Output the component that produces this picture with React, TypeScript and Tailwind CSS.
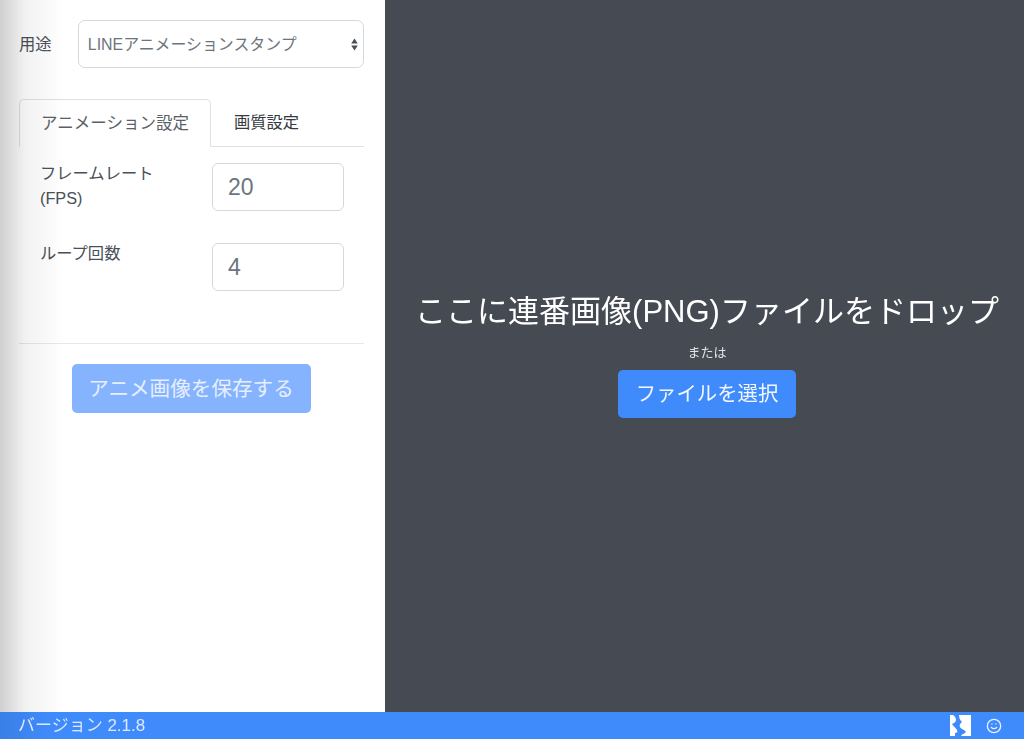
import { Smile } from "lucide-react";

function NumberRow({ label, value }: { label: React.ReactNode; value: string }) {
	return (
		<div className="flex h-[48px] items-start pl-[21px]">
			<div className="-mt-[2px] w-[172px] text-[16.3px] leading-[25px] text-[#495057]">{label}</div>
			<div className="flex h-[48px] w-[132px] items-center rounded-[6px] border border-[#d3d9df] bg-white pl-[15px] text-[23px] text-[#6c757d]">
				{value}
			</div>
		</div>
	);
}

function SelectArrows() {
	return (
		<svg width="7" height="13" viewBox="0 0 7 13" className="absolute right-[5px] top-[17px]">
			<path d="M3.5 0.5 L6.8 5.5 L0.2 5.5 Z" fill="#4a4f55" />
			<path d="M3.5 12.5 L6.8 7.5 L0.2 7.5 Z" fill="#4a4f55" />
		</svg>
	);
}

function Logo() {
	return (
		<svg width="21" height="21" viewBox="0 0 21 21">
			<rect width="21" height="21" fill="#ffffff" />
			<path
				fill="#408bfc"
				d="M3 0 H9 C9 3 10 5 12 7 C10 9 9 10 10 12 C11 14 14 14 16 17 C14 19 12 19 11 21 H5 V18 C7 18 8 17 7 15 C6 13 3 11 2 9 C4 8 6 7 6 5 C6 3 5 1 3 0 Z"
			/>
		</svg>
	);
}

export default function App() {
	return (
		<div className="flex h-[739px] w-[1024px] flex-col overflow-hidden font-['Liberation_Sans','Noto_Sans_CJK_JP',sans-serif]">
			<div className="flex h-[712px]">
				<aside className="relative w-[385px] shrink-0 bg-white pl-[19px] pr-[21px] pt-[20px]">
					<div className="pointer-events-none absolute inset-y-0 left-0 z-10 w-[64px] bg-gradient-to-r from-[#d0d0d0] via-[#f2f2f2] via-40% to-white mix-blend-multiply" />
					<div className="flex items-center">
						<span className="w-[59px] text-[16.3px] text-[#495057]">用途</span>
						<div className="relative flex h-[48px] w-[287px] items-center rounded-[7px] border border-[#d3d9df] bg-white pl-[9px] pt-[1px] text-[15.9px] text-[#6c757d]">
							LINEアニメーションスタンプ
							<SelectArrows />
						</div>
					</div>

					<div className="mt-[31px] flex h-[48px] border-b border-[#dee2e6]">
						<div className="-mb-px flex h-[48px] w-[192px] items-center justify-center rounded-t-[5px] border border-[#dee2e6] border-b-white bg-white text-[16.5px] text-[#5a6067]">
							アニメーション設定
						</div>
						<div className="flex items-center pl-[23px] text-[16.3px] text-[#343a40]">画質設定</div>
					</div>

					<div className="mt-[16px] flex flex-col gap-[32px]">
						<NumberRow
							label={
								<>
									フレームレート
									<br />
									(FPS)
								</>
							}
							value="20"
						/>
						<NumberRow label="ループ回数" value="4" />
					</div>

					<div className="mt-[52px] border-t border-[#e8e8e8]" />

					<div className="mt-[20px] flex justify-center pr-[1px]">
						<div className="flex h-[49px] w-[239px] items-center justify-center rounded-[5px] bg-[#86b3fd] pt-[1px] text-[20.6px] text-[#e6efff]">
							アニメ画像を保存する
						</div>
					</div>
				</aside>

				<main className="flex flex-1 flex-col items-center bg-[#464a53] pl-[5px] pt-[290px] text-white">
					<h1 className="whitespace-nowrap text-[31px] font-normal leading-[44px]">ここに連番画像(PNG)ファイルをドロップ</h1>
					<p className="mt-[10px] text-[13px] leading-[18px] text-[#e2e3e5]">または</p>
					<div className="mt-[8px] flex h-[48px] w-[178px] items-center justify-center rounded-[5px] bg-[#408bfc] text-[20.4px] text-[#f2f7ff]">
						ファイルを選択
					</div>
				</main>
			</div>

			<footer className="flex h-[27px] items-center justify-between bg-[#408bfc] bg-gradient-to-r from-[#3a7fe6] from-0% to-[#408bfc] to-[5%] pl-[18px] pr-[22px] text-[17px] text-[#dbe8fe]">
				<span>バージョン 2.1.8</span>
				<div className="flex items-center gap-[15px]">
					<Logo />
					<Smile size={16} strokeWidth={2} className="text-[#e8f0ff]" />
				</div>
			</footer>
		</div>
	);
}
